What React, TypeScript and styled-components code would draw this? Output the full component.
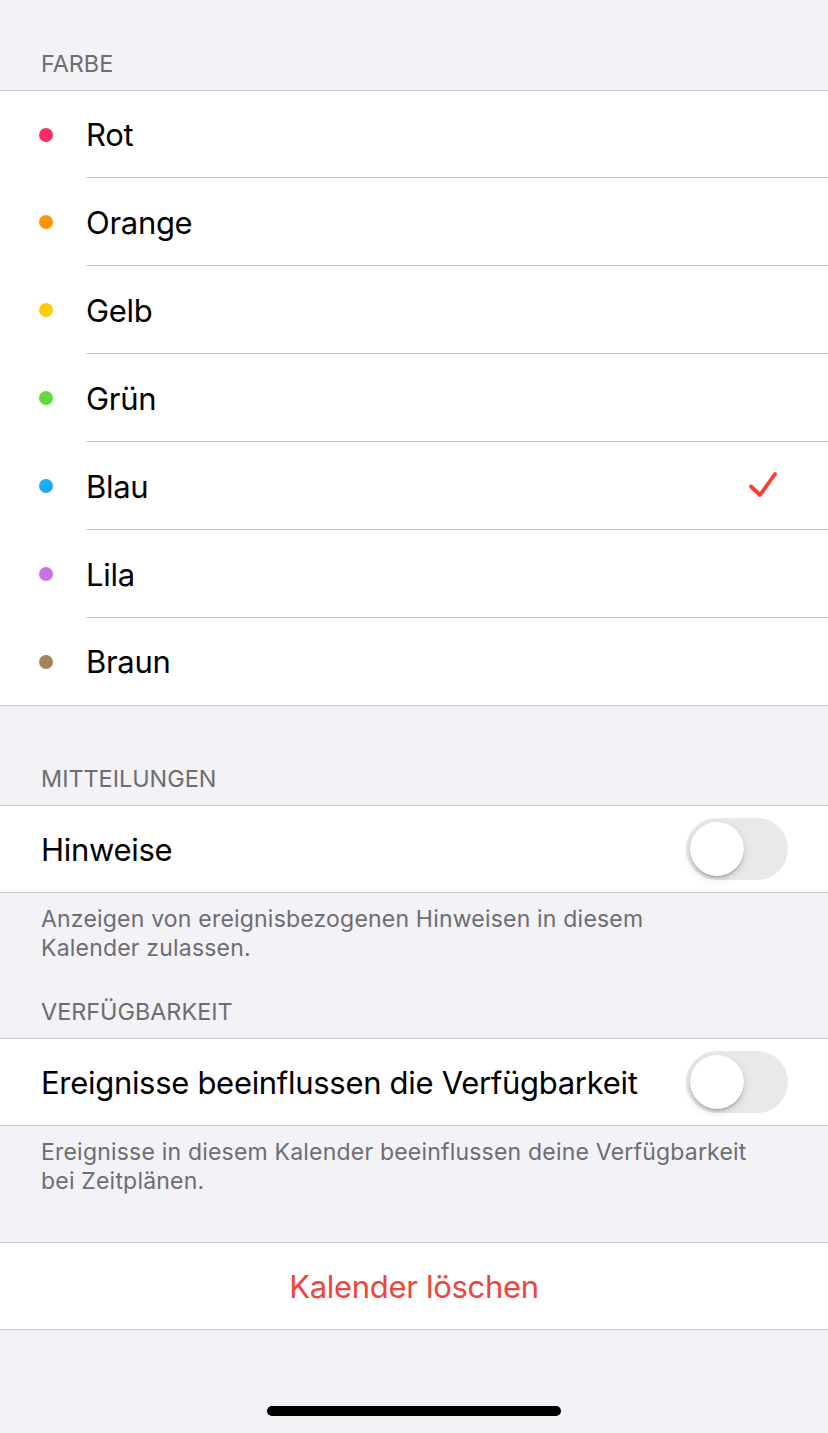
import React from "react";
import styled, { createGlobalStyle } from "styled-components";

const Global = createGlobalStyle`
  html, body { margin: 0; padding: 0; background: #f2f2f7; }
  body { font-family: Inter, "Liberation Sans", "Noto Sans", sans-serif; -webkit-font-smoothing: antialiased; }
`;

const Page = styled.div`
  width: 828px;
  min-height: 1433px;
  background: #f2f2f7;
  display: flex;
  flex-direction: column;
`;

const SectionHeader = styled.div<{ $top: number }>`
  padding: ${(p) => p.$top}px 41px 11px;
  font-size: 23.4px;
  line-height: 30px;
  color: #6d6d72;
  text-transform: uppercase;
`;

const Group = styled.div`
  background: #fff;
  border-top: 1px solid #c8c7cc;
  border-bottom: 1px solid #c8c7cc;
`;

const ColorRow = styled.div<{ $last?: boolean; $first?: boolean }>`
  height: ${(p) => (p.$first || p.$last ? 87 : 88)}px;
  display: flex;
  align-items: center;
  position: relative;
  &::after {
    content: "";
    display: ${(p) => (p.$last ? "none" : "block")};
    position: absolute;
    left: 86px;
    right: 0;
    bottom: 0;
    height: 1px;
    background: #c8c7cc;
  }
`;

const Dot = styled.span<{ $color: string }>`
  width: 14px;
  height: 14px;
  border-radius: 50%;
  background: ${(p) => p.$color};
  margin: 0 33px 0 39px;
  flex: none;
`;

const Label = styled.span`
  font-size: 31px;
  letter-spacing: -0.3px;
  color: #000;
  flex: 1;
`;

const Check = styled.svg`
  width: 34px;
  height: 34px;
  margin-right: 47px;
`;

const SwitchRow = styled.div`
  height: 86px;
  display: flex;
  align-items: center;
  padding: 0 40px 0 41px;
`;

const Track = styled.div`
  width: 102px;
  height: 62px;
  border-radius: 31px;
  background: #e9e9eb;
  padding: 4px;
  box-sizing: border-box;
  flex: none;
`;

const Knob = styled.div`
  width: 54px;
  height: 54px;
  border-radius: 50%;
  background: #fff;
  box-shadow: 0 3px 8px rgba(0, 0, 0, 0.15), 0 1px 1px rgba(0, 0, 0, 0.16), 0 3px 1px rgba(0, 0, 0, 0.06);
`;

const Footer = styled.div`
  padding: 12px 41px 0;
  font-size: 23px;
  line-height: 29px;
  color: #6d6d72;
  letter-spacing: 0.2px;
`;

const ButtonRow = styled.div`
  height: 86px;
  display: flex;
  align-items: center;
  justify-content: center;
  font-size: 31px;
  letter-spacing: -0.3px;
  color: #f0443a;
`;

const Spacer = styled.div<{ $h: number }>`
  height: ${(p) => p.$h}px;
  flex: none;
`;

const HomeBar = styled.div`
  width: 294px;
  height: 10px;
  border-radius: 5px;
  background: #000;
  align-self: center;
  margin-top: auto;
  margin-bottom: 17px;
`;

const colors = [
  { name: "Rot", color: "#ff2d63" },
  { name: "Orange", color: "#ff9500" },
  { name: "Gelb", color: "#ffcc00" },
  { name: "Grün", color: "#63da38" },
  { name: "Blau", color: "#1badf8", checked: true },
  { name: "Lila", color: "#cc73e1" },
  { name: "Braun", color: "#a2845e" },
];

export default function App() {
  return (
    <Page>
      <Global />
      <SectionHeader $top={49}>Farbe</SectionHeader>
      <Group>
        {colors.map((c, i) => (
          <ColorRow key={c.name} $first={i === 0} $last={i === colors.length - 1}>
            <Dot $color={c.color} />
            <Label>{c.name}</Label>
            {c.checked && (
              <Check viewBox="0 0 34 34">
                <path d="M4 17.5 L13 26 L28 5" fill="none" stroke="#ff3b30" strokeWidth="3.8" strokeLinecap="round" strokeLinejoin="round" />
              </Check>
            )}
          </ColorRow>
        ))}
      </Group>
      <SectionHeader $top={58}>Mitteilungen</SectionHeader>
      <Group>
        <SwitchRow>
          <Label>Hinweise</Label>
          <Track><Knob /></Track>
        </SwitchRow>
      </Group>
      <Footer>
        Anzeigen von ereignisbezogenen Hinweisen in diesem
        <br />
        Kalender zulassen.
      </Footer>
      <SectionHeader $top={34}>Verfügbarkeit</SectionHeader>
      <Group>
        <SwitchRow>
          <Label>Ereignisse beeinflussen die Verfügbarkeit</Label>
          <Track><Knob /></Track>
        </SwitchRow>
      </Group>
      <Footer>
        Ereignisse in diesem Kalender beeinflussen deine Verfügbarkeit
        <br />
        bei Zeitplänen.
      </Footer>
      <Spacer $h={46} />
      <Group>
        <ButtonRow>Kalender löschen</ButtonRow>
      </Group>
      <HomeBar />
    </Page>
  );
}
